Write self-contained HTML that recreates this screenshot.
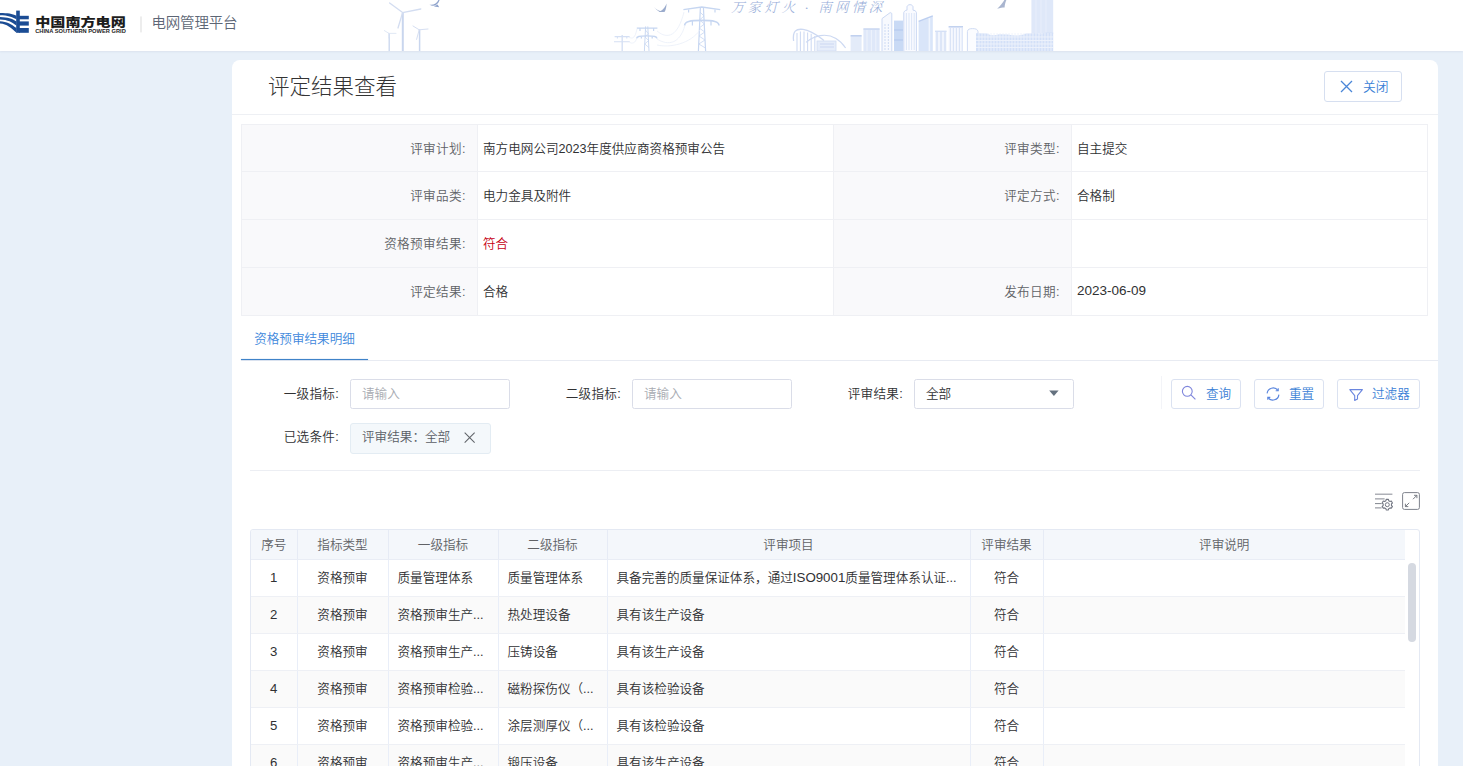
<!DOCTYPE html>
<html lang="zh-CN">
<head>
<meta charset="utf-8">
<title>评定结果查看</title>
<style>
*{box-sizing:border-box;margin:0;padding:0}
html,body{width:1463px;height:766px;overflow:hidden}
body{background:#e8f0f9;font-family:"Liberation Sans","Noto Sans CJK SC",sans-serif;font-size:13px;color:#303133;position:relative;font-weight:350}
.abs{position:absolute}
#hdr{position:absolute;left:0;top:0;width:1463px;height:51px;background:#fff;box-shadow:0 1px 2px rgba(40,60,100,.07)}
#hdr .brand{position:absolute;left:34px;top:14px;font-size:13px;font-weight:900;color:#1a1a1a;letter-spacing:0.2px;line-height:14px;white-space:nowrap}
#hdr .brand-en{position:absolute;left:34px;top:28px;font-size:4.5px;font-weight:700;color:#222;line-height:6px;white-space:nowrap;letter-spacing:0.12px}
#hdr .sep{position:absolute;left:140px;top:16px;width:1px;height:16px;background:#d5d5d5}
#hdr .plat{position:absolute;left:151px;top:13px;font-size:14.5px;color:#5b6472;line-height:20px;white-space:nowrap}
#card{position:absolute;left:232px;top:60px;width:1206px;height:720px;background:#fff;border-radius:8px 8px 0 0}
#title{position:absolute;left:36px;top:11px;font-size:22px;line-height:32px;color:#333;white-space:nowrap;font-weight:300}
#tline{position:absolute;left:0;top:54px;width:1206px;height:1px;background:#eef0f4}

#title{font-size:21.5px}
#closebtn{position:absolute;left:1092px;top:11px;width:78px;height:31px;border:1px solid #d6dff0;border-radius:3px;background:#fff;color:#3b7fd6;font-size:12.8px;line-height:29px;white-space:nowrap}
#closebtn svg{position:absolute;left:15px;top:8px}
#closebtn span{position:absolute;left:38px;top:0}
#ftab{position:absolute;left:9px;top:64px;width:1186px;border-collapse:collapse;table-layout:fixed}
#ftab td{height:48px;border:1px solid #ebeef4;font-size:13px;padding:0 0 0 5px;vertical-align:middle;white-space:nowrap}
#ftab td.l{background:#f9f9fb;color:#606266;text-align:right;padding:0 11px 0 0;letter-spacing:.4px}
#ftab td.v{color:#303133}
#tabs{position:absolute;left:9px;top:255px;width:1197px;height:46px;border-bottom:1px solid #e8ebf2}
#tabs .t{position:absolute;left:0;top:0;width:127px;height:45px;border-bottom:none;color:#3e88dc;font-size:13px;line-height:48px;text-align:center}

#ftab td{font-size:12.6px;padding-bottom:2px}
#ftab tr:first-child td{height:47px}
#ftab td.l{padding:0 11px 2px 0}
#ftab td{border-color:#eff0f4}
#tabs .t{font-size:12.6px}
.lbl{letter-spacing:.3px;margin-left:-1px;position:absolute;font-size:12.6px;color:#303133;line-height:30px;height:30px;white-space:nowrap;text-align:right;width:90px}
.inp{position:absolute;height:30px;width:160px;border:1px solid #dadde8;border-radius:2.5px;background:#fff;font-size:12.6px;line-height:29px;padding-left:11px;color:#a8abb2;white-space:nowrap}
.btn{position:absolute;top:319px;height:30px;border:1px solid #dbe2f1;border-radius:3px;background:#fff;color:#3b7fd6;font-size:12.6px;line-height:27px;white-space:nowrap}
.btn svg{position:absolute}
.btn span{position:absolute;top:1px}
#tag{position:absolute;left:118px;top:363px;width:141px;height:31px;border:1px solid #e3ecf3;border-radius:3px;background:#f4f8fb;color:#5a5e66;font-size:12.6px;line-height:27px;padding-left:11px;white-space:nowrap}
#tag svg{position:absolute;left:113px;top:7.6px;width:11.3px;height:11.3px}
#div2{position:absolute;left:18px;top:410px;width:1170px;height:1px;background:#eceef3}
#vsep{position:absolute;left:929px;top:316px;width:1px;height:33px;background:#f3f4f8}
#grid{position:absolute;left:18px;top:469px;width:1170px;height:260px;border:1px solid #e4e9f3;border-radius:3px 3px 0 0;overflow:hidden;background:#fff}
#gt{position:absolute;left:0;top:0;width:1154px;border-collapse:collapse;table-layout:fixed}
#gt th{height:29px;background:#f4f7fb;color:#606266;font-weight:350;font-size:12.6px;border-right:1px solid #e6ebf5;border-bottom:1px solid #e9edf5;text-align:center;padding-bottom:2px;white-space:nowrap}
#gt td{height:37px;font-size:12.6px;color:#303133;border-right:1px solid #e9eef8;border-bottom:1px solid #eef0f5;padding:0 0 2px 9px;white-space:nowrap;overflow:hidden}
#gt td.c{text-align:center;padding-left:0}
#gt td.n{font-size:13.2px;padding-bottom:0}
#gt tr.s td{background:#fafafa}
#gt th:last-child,#gt td:last-child{border-right:none}
#sb{position:absolute;left:1157px;top:33px;width:8px;height:79px;border-radius:4px;background:#d5d9e1}
#slogan{position:absolute;left:731px;top:-2px;font-family:"Liberation Serif","Noto Serif CJK SC",serif;font-style:italic;font-size:13.5px;letter-spacing:3.3px;color:#86a0d3;white-space:nowrap;line-height:20px;opacity:.85}
#tul{position:absolute;left:0;top:44px;width:127px;height:1px;background:#3f83c9;box-shadow:0 0 1px rgba(63,131,201,.75)}
</style>
</head>
<body>
<div id="hdr">
<svg id="hsvg" width="1463" height="51" viewBox="0 0 1463 51" style="position:absolute;left:0;top:0">
  <!-- logo mark -->
  <g fill="#1b4c94">
    <rect x="16.2" y="10.6" width="3.6" height="22.2"/>
    <rect x="19" y="15.8" width="9.8" height="3.5"/>
    <rect x="19" y="21.4" width="9.8" height="4.2"/>
    <rect x="19" y="28" width="9.8" height="4.8"/>
    <path d="M0 13C8 13 12 13.7 16.5 15.8V19.3C12 16.7 8 15.4 0 15.2Z"/>
    <path d="M0 17C8 17.2 12 18.7 16.5 21.4V25.6C12 21.9 8 19.8 0 19.4Z"/>
    <path d="M0 21.2C7 21.6 11 24 16.5 28V32.8C11 27.4 7 24 0 23.4Z"/>
  </g>
  <text x="35.2" y="27.2" font-family="'Liberation Sans','Noto Sans CJK SC',sans-serif" font-weight="900" font-size="12.4" fill="#1d1d1d" textLength="90.6" lengthAdjust="spacingAndGlyphs">中国南方电网</text>
  <text x="35.2" y="32.8" font-family="'Liberation Sans',sans-serif" font-weight="700" font-size="4.7" fill="#222" textLength="90.6" lengthAdjust="spacingAndGlyphs">CHINA SOUTHERN POWER GRID</text>
  <rect x="140.5" y="16.4" width="1" height="16" fill="#dcdcdc"/>
  <text x="151.6" y="28" font-family="'Liberation Sans','Noto Sans CJK SC',sans-serif" font-size="14.5" fill="#5d6675" textLength="85.8" lengthAdjust="spacing">电网管理平台</text>
  <!-- wind turbines -->
  <g stroke="#c9d6ee" fill="none" stroke-linecap="round">
    <path d="M402.8 13V51" stroke-width="2"/>
    <path d="M402.6 12.6L389.6 3M402.6 12.6L420.8 9M402.6 12.6L398 28" stroke-width="1.3" stroke="#d3ddf1"/>
    <path d="M389.2 33.6V51" stroke-width="1.3"/>
    <path d="M389 33.4L384.4 30.6M389 33.4L396 33.4M389 33.4L388.6 38" stroke-width="0.9" stroke="#dde5f4"/>
    <path d="M419.6 30V51" stroke-width="1.5"/>
    <path d="M419.2 29.8L413 26M419.2 29.8L428 29M419.2 29.8L416.6 39.4" stroke-width="1" stroke="#d6dff2"/>
  </g>
  <!-- power towers -->
  <g stroke="#c6d6f1" fill="none" stroke-width="1">
    <path d="M700.4 7L698.4 51M703.4 7L705.6 51" stroke-width="1.2"/>
    <path d="M700 12L704 16L699.6 20L704.4 24L699.2 28L704.8 32L699 36L705 40L698.8 44L705.4 48" stroke-width="0.8"/>
    <path d="M683.4 9.6L701.8 7L720.2 9.6" stroke-width="1.4"/>
    <path d="M688.6 9.4V12.6M715 9.4V12.6" stroke-width="1.2"/>
    <path d="M684.6 25.6C684.6 21.4 690 20.4 701.8 20.4C713.6 20.4 719 21.4 719 25.6" stroke-width="1.6"/>
    <path d="M692.4 21V25.4M711 21V25.4" stroke-width="1.2"/>
    <path d="M645.6 26.4L644.4 51M647.8 26.4L649 51" stroke="#cad9f2"/>
    <path d="M645.4 30L648.2 33.5L645 37L648.6 40.5L644.8 44L648.8 47.5" stroke-width="0.7"/>
    <path d="M636.8 28.2H657.4M640 28.4V31M653.6 28.4V31" stroke-width="1.2"/>
    <path d="M636.6 38.6C636.6 36.4 639 35.8 646.8 35.8C654.6 35.8 657 36.4 657 38.6M641.4 36V38.6M652.2 36V38.6" stroke-width="1.3"/>
    <path d="M622.2 35V51" stroke="#d5e0f4" stroke-width="1.4"/>
    <path d="M614.6 36.6H629.6M614 41.8H629.8M617.4 36.6V38.6M626.8 36.6V38.6" stroke="#d5e0f4" stroke-width="1.1"/>
    <path d="M657 31C668 40 678 36 684 12M657 39C668 46 680 44 685 25M629 37.4C633 39 635 38 637 29M629.6 42.4C633 44 635 43 637 38M657 45C670 48 690 44 700 30" stroke="#e6ecf8" stroke-width="0.7"/>
  </g>
  <!-- city skyline -->
  <g stroke="#c3d3f0" stroke-width="0.8" fill="none">
    <path d="M793.6 41C792.4 31 796 28.6 803 29.4C812 30.6 818 36 824 40.6" stroke="#cdd9f2" stroke-width="1.3"/>
    <path d="M797 33V51M800.4 31.6V51M804 31.6V51M807.6 32.4V51M811.2 33.8V51M814.8 36V51" stroke="#cfdbf3" stroke-width="1.1"/>
    <path d="M806 42.4C814 35.4 826 32.6 836 38.4C840 40.8 843.4 44.6 845.6 48" stroke="#cdd9f2" stroke-width="1.2"/>
    <rect x="817" y="41" width="19" height="10" fill="#e6edfa" stroke="#d0dcf3"/>
    <path d="M820 44H834M820 47H834" stroke="#cbd8f2" stroke-width="1.2"/>
    <rect x="850.6" y="35.4" width="11" height="15.6" fill="#e3ebf9" stroke="none"/>
    <path d="M850.6 35.8H861.6" stroke="#bccdee" stroke-width="1.4"/>
    <rect x="863.4" y="28.6" width="16.2" height="22.4" fill="#dfe8f9" stroke="none"/>
    <path d="M863.4 29H879.6" stroke="#c3d2ef" stroke-width="1.2"/>
    <path d="M867 30V51M871.4 30V51M875.8 30V51" stroke="#eef3fc" stroke-width="1"/>
    <path d="M882 51V18.6L890.2 12.6L891.8 13.4V51" fill="#f7f9fe" stroke="#ccd9f3" stroke-width="1"/>
    <path d="M885 24V50M888.4 24V50" stroke="#d5e0f5" stroke-width="1.2" stroke-dasharray="2 1"/>
    <rect x="894" y="20.6" width="9" height="30.4" fill="#c9daf5" stroke="none"/>
    <path d="M894 30H903M894 40H903" stroke="#b9cdf0" stroke-width="1.6"/>
    <path d="M903.8 51V12.4C904.6 10.6 906 10.2 907 10.2V6.6C908 4 912 4 913 6.6V10.2C914.4 10.2 915.8 10.8 916.4 12.4V51" fill="#fafbff" stroke="#cbd8f3" stroke-width="1"/>
    <path d="M906.4 13V50M909 13V50M911.6 13V50M914.2 13V50" stroke="#d9e3f6" stroke-width="0.9"/>
    <path d="M918.6 51V21.4L932.8 15.8V51Z" fill="#d9e5f9" stroke="none"/>
    <path d="M918.6 21.4L932.8 15.8" stroke="#bdcff0" stroke-width="1.4"/>
    <path d="M929.4 18V51" stroke="#eff4fd" stroke-width="1.6"/>
    <rect x="935" y="31" width="11.6" height="20" fill="#f1f5fd" stroke="none"/>
    <path d="M935 31.2H946.6M937 32V51M941 32V51M945 32V51" stroke="#c9d7f2" stroke-width="1"/>
    <rect x="948.6" y="26.4" width="14.4" height="24.6" fill="#f6f8fe" stroke="none"/>
    <path d="M948.6 26.8H963" stroke="#bccdee" stroke-width="1.4"/>
    <path d="M950.4 28V51M953.4 28V51M956.4 28V51M959.4 28V51M962.2 28V51" stroke="#d3dff5" stroke-width="0.9"/>
    <path d="M967.4 51V31.6C967.6 29.2 969.6 28.6 972.6 28.6C975.6 28.6 977.6 29.2 978 31.6V51" fill="#fbfcff" stroke="#d0dcf4" stroke-width="1"/>
    <rect x="1031.4" y="0" width="21.8" height="34" fill="#dfe8f9" stroke="none"/>
    <path d="M1036 0V33M1041 0V33M1046 0V33" stroke="#e8eefb" stroke-width="1"/>
    <path d="M976 51V33.2L987 33.4C991 35.6 995 35.8 999 34.2L1008 34.4C1014 36 1020 36 1026 33.4L1036 33.4C1040 35 1044 33.6 1046 32.6H1053.2V51Z" fill="#d3e0f8" stroke="none"/>
    <path d="M976 37H1053M976 40.5H1053M976 44H1053M976 47.5H1053" stroke="#eef3fc" stroke-width="0.9"/>
    <path d="M979 33V51M982 33V51M985 33V51M988 33V51M991 33V51M994 33V51M997 33V51M1000 33V51M1003 33V51M1006 33V51M1009 33V51M1012 33V51M1015 33V51M1018 33V51M1021 33V51M1024 33V51M1027 33V51M1030 33V51M1033 33V51M1036 33V51M1039 33V51M1042 33V51M1045 33V51M1048 33V51M1051 33V51" stroke="#eef3fc" stroke-width="0.9"/>
  </g>
  <!-- birds -->
  <path d="M429.4 4.6C433 7.2 438 5.4 439.6 0L438.4 0C436.8 3.4 433.4 5.4 429.4 4.6Z M434 6.6L439.2 7.2L437.6 4.4Z" fill="#8fa3cc"/>
  <path d="M653.8 6.9C656.6 9.4 659 10.8 660.8 10.9C663.6 9 665.4 6.4 666.5 3.4C666.6 6 666 8.8 664.8 11.8C663.4 12 661.4 12.2 659.6 11.9C657.6 10.6 655.6 8.8 653.8 6.9Z" fill="#9aabcc"/>
  <path d="M1006.4 0L1004.4 0C1002.6 3 1000 6 997.2 8.8C1000 8 1002.6 7.6 1004.6 7.6C1004.6 5 1005.4 2.4 1006.4 0Z" fill="#a9b5cf"/>
</svg>
<div id="slogan">万家灯火 · 南网情深</div>
</div>
<div id="card">
  <div id="title">评定结果查看</div>
  <div id="tline"></div>

  <div id="closebtn"><svg width="13" height="13" viewBox="0 0 13 13"><path d="M1 1L12 12M12 1L1 12" stroke="#4a86d8" stroke-width="1.3" fill="none"/></svg><span>关闭</span></div>
  <table id="ftab">
    <colgroup><col style="width:236px"><col style="width:356px"><col style="width:238px"><col style="width:356px"></colgroup>
    <tr><td class="l">评审计划:</td><td class="v">南方电网公司2023年度供应商资格预审公告</td><td class="l">评审类型:</td><td class="v">自主提交</td></tr>
    <tr><td class="l">评审品类:</td><td class="v">电力金具及附件</td><td class="l">评定方式:</td><td class="v">合格制</td></tr>
    <tr><td class="l">资格预审结果:</td><td class="v" style="color:#c60012">符合</td><td class="l"></td><td class="v"></td></tr>
    <tr><td class="l">评定结果:</td><td class="v">合格</td><td class="l">发布日期:</td><td class="v"><span style="font-size:13.5px">2023-06-09</span></td></tr>
  </table>
  <div id="tabs"><div class="t">资格预审结果明细</div><div id="tul"></div></div>

  <div class="lbl" style="left:18px;top:319px">一级指标:</div>
  <div class="inp" style="left:118px;top:319px">请输入</div>
  <div class="lbl" style="left:300px;top:319px">二级指标:</div>
  <div class="inp" style="left:400px;top:319px">请输入</div>
  <div class="lbl" style="left:582px;top:319px">评审结果:</div>
  <div class="inp" style="left:682px;top:319px;color:#303133">全部<svg style="position:absolute;left:134px;top:10px" width="10" height="7" viewBox="0 0 10 7"><path d="M0.2 0.4H9.6L4.9 6Z" fill="#64717f"/></svg></div>
  <div id="vsep"></div>
  <div class="btn" style="left:939px;width:70px"><svg style="left:9.3px;top:5.2px" width="16" height="16" viewBox="0 0 16 16"><circle cx="6.3" cy="6.3" r="4.9" stroke="#7f86dc" stroke-width="1.1" fill="none"/><path d="M9.9 9.9L14.4 14.4" stroke="#7f86dc" stroke-width="1.1"/></svg><span style="left:34px">查询</span></div>
  <div class="btn" style="left:1022px;width:70px"><svg style="left:10px;top:6px" width="16" height="16" viewBox="0 0 16 16"><path d="M2.1 7.4A6 6 0 0 1 12.9 4.4M13.9 8.6A6 6 0 0 1 3.1 11.6" stroke="#5a86de" stroke-width="1.15" fill="none"/><path d="M13.2 2.2V4.7H10.7M2.8 13.8V11.3H5.3" stroke="#5a86de" stroke-width="1.15" fill="none"/></svg><span style="left:34px">重置</span></div>
  <div class="btn" style="left:1105px;width:83px"><svg style="left:11px;top:7px" width="15" height="15" viewBox="0 0 15 15"><path d="M0.8 2.6H13.4L8.5 8.6V12.1L5.7 13.5V8.6Z" stroke="#6a86df" stroke-width="1.1" fill="none" stroke-linejoin="round"/></svg><span style="left:34px">过滤器</span></div>
  <div class="lbl" style="left:18px;top:362px">已选条件:</div>
  <div id="tag">评审结果：全部<svg width="12" height="12" viewBox="0 0 12 12"><path d="M0.7 0.7L11.3 11.3M11.3 0.7L0.7 11.3" stroke="#5f6368" stroke-width="1.1" fill="none"/></svg></div>
  <div id="div2"></div>
  <svg style="position:absolute;left:1142px;top:432px" width="20" height="20" viewBox="0 0 20 20" fill="none" stroke="#82868f" stroke-width="1"><path d="M1 2.2H18.4" stroke="#9a9da5" stroke-width="1.2"/><path d="M1 6.9H10.6M1 11.6H7.6M1 15.9H7.6"/><circle cx="13.3" cy="12.7" r="2" stroke="#737783"/><path d="M11.92 8.73L12.18 7.42L14.42 7.42L14.68 8.73L16.04 9.52L17.31 9.09L18.44 11.03L17.43 11.91L17.43 13.49L18.44 14.37L17.31 16.31L16.04 15.88L14.68 16.67L14.42 17.98L12.18 17.98L11.92 16.67L10.56 15.88L9.29 16.31L8.16 14.37L9.17 13.49L9.17 11.91L8.16 11.03L9.29 9.09L10.56 9.52Z" stroke="#737783" stroke-linejoin="round" stroke-width="1.1"/></svg>
  <svg style="position:absolute;left:1170px;top:432px" width="19" height="19" viewBox="0 0 19 19" fill="none" stroke="#6b6f78" stroke-width="1"><rect x="0.6" y="0.6" width="16.8" height="16.8" rx="1.8" stroke="#7f838d"/><path d="M11 7.2L14.8 3.4M12 3.3H14.9V6.2M7.2 10.8L3.5 14.5M3.4 11.7V14.6H6.3" stroke-width="0.9"/></svg>
  <div id="grid">
    <table id="gt">
      <colgroup><col style="width:46px"><col style="width:91px"><col style="width:110px"><col style="width:109px"><col style="width:363px"><col style="width:73px"><col style="width:362px"></colgroup>
      <tr><th>序号</th><th>指标类型</th><th>一级指标</th><th>二级指标</th><th>评审项目</th><th>评审结果</th><th>评审说明</th></tr>
      <tr><td class="c n">1</td><td class="c">资格预审</td><td>质量管理体系</td><td>质量管理体系</td><td>具备完善的质量保证体系，通过<span style="font-size:13.3px">ISO9001</span>质量管理体系认证...</td><td class="c">符合</td><td></td></tr>
      <tr class="s"><td class="c n">2</td><td class="c">资格预审</td><td>资格预审生产...</td><td>热处理设备</td><td>具有该生产设备</td><td class="c">符合</td><td></td></tr>
      <tr><td class="c n">3</td><td class="c">资格预审</td><td>资格预审生产...</td><td>压铸设备</td><td>具有该生产设备</td><td class="c">符合</td><td></td></tr>
      <tr class="s"><td class="c n">4</td><td class="c">资格预审</td><td>资格预审检验...</td><td>磁粉探伤仪（...</td><td>具有该检验设备</td><td class="c">符合</td><td></td></tr>
      <tr><td class="c n">5</td><td class="c">资格预审</td><td>资格预审检验...</td><td>涂层测厚仪（...</td><td>具有该检验设备</td><td class="c">符合</td><td></td></tr>
      <tr class="s"><td class="c n">6</td><td class="c">资格预审</td><td>资格预审生产...</td><td>锻压设备</td><td>具有该生产设备</td><td class="c">符合</td><td></td></tr>
    </table>
    <div id="sb"></div>
  </div>
</div>
</body>
</html>
